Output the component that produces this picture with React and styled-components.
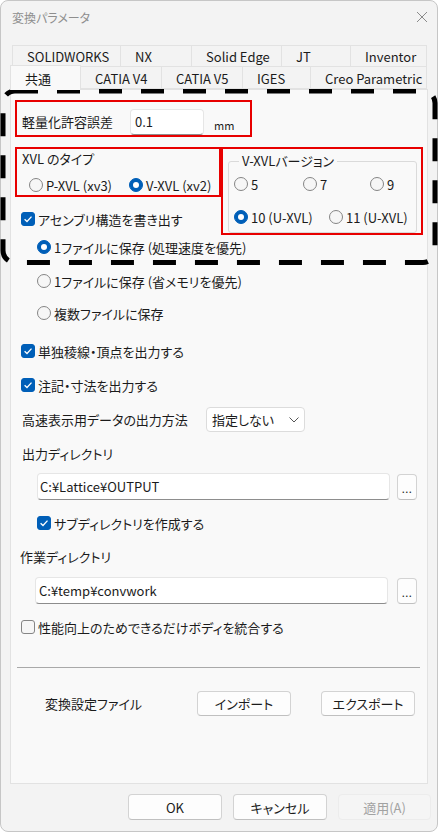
import React from "react";
import styled, { createGlobalStyle } from "styled-components";

const GlobalStyle = createGlobalStyle`
  html, body {
    margin: 0;
    padding: 0;
    background: #fff;
  }
  body {
    font-family: "Noto Sans CJK JP", "Noto Sans", sans-serif;
    font-size: 13px;
    color: #1b1b1b;
    font-feature-settings: "palt";
  }
  * {
    box-sizing: border-box;
  }
`;

const Window = styled.div`
  position: relative;
  width: 438px;
  height: 832px;
  border: 1px solid #c6c6c6;
  border-radius: 8px;
  background: #f3f3f3;
  display: flex;
  flex-direction: column;
`;

const TitleBar = styled.div`
  height: 34px;
  display: flex;
  align-items: center;
  justify-content: space-between;
  padding: 0 9px 2px 11px;
`;

const Title = styled.span`
  font-size: 12px;
  color: #8e8e8e;
`;

const Tabs = styled.div`
  margin: 10px 9px 0 9px;
  display: flex;
  flex-direction: column;
`;

const TabRow = styled.div`
  display: flex;
  height: ${(p) => p.$h}px;
  margin-left: ${(p) => p.$indent || 0}px;
  margin-top: ${(p) => p.$overlap || 0}px;
  align-items: flex-end;
`;

const Tab = styled.div`
  width: ${(p) => p.$w}px;
  height: ${(p) => (p.$active ? "25px" : "100%")};
  padding-left: 14px;
  display: flex;
  align-items: center;
  background: ${(p) => (p.$active ? "#f9f9f9" : "#f3f3f3")};
  border: 1px solid #e2e2e2;
  border-bottom: ${(p) => (p.$active ? "none" : "1px solid #e2e2e2")};
  margin-right: -1px;
  margin-bottom: ${(p) => (p.$active ? "-1px" : "0")};
  position: relative;
  z-index: ${(p) => (p.$active ? 2 : 1)};
  white-space: nowrap;
  padding-top: ${(p) => (p.$active ? "0" : "1px")};
`;

const Panel = styled.div`
  margin: 0 9px;
  height: 695px;
  background: #f9f9f9;
  border: 1px solid #e2e2e2;
  display: flex;
  flex-direction: column;
`;

const RedBox = styled.div`
  border: 2px solid #e80000;
  width: ${(p) => p.$w}px;
  height: ${(p) => p.$h}px;
`;

const ToleranceBox = styled(RedBox)`
  margin: 10px 0 0 4px;
  display: flex;
  align-items: center;
  padding: 6px 0 0 5px;
`;

const FieldLabel = styled.span`
  width: ${(p) => p.$w || "auto"};
  line-height: 18px;
  white-space: nowrap;
`;

const TextInput = styled.div`
  width: ${(p) => p.$w}px;
  height: ${(p) => p.$h}px;
  background: #fff;
  border: 1px solid #e6e6e6;
  border-bottom: 1px solid #8d8d8d;
  border-radius: 4px;
  padding-left: ${(p) => p.$pad}px;
  display: flex;
  align-items: center;
  white-space: nowrap;
`;

const Unit = styled.span`
  font-size: 11px;
  margin: 7px 0 0 10px;
`;

const TypeGrid = styled.div`
  display: grid;
  grid-template-columns: 206px 202px;
  margin: 10px 0 0 4px;
`;

const LeftCol = styled.div`
  display: flex;
  flex-direction: column;
`;

const XvlBox = styled(RedBox)`
  padding: 0 0 0 5px;
  display: flex;
  flex-direction: column;
`;

const Line = styled.div`
  display: flex;
  align-items: center;
  height: ${(p) => p.$h || 18}px;
  margin-top: ${(p) => p.$mt || 0}px;
  margin-left: ${(p) => p.$ml || 0}px;
  white-space: nowrap;
`;

const Option = styled.div`
  display: flex;
  align-items: center;
  width: ${(p) => (p.$w ? `${p.$w}px` : "auto")};
  white-space: nowrap;
`;

const RadioDot = styled.span`
  width: 14px;
  height: 14px;
  border-radius: 50%;
  flex: none;
  margin-right: 3px;
  background: ${(p) => (p.$on ? "#005fb8" : "#f6f6f6")};
  border: 1px solid ${(p) => (p.$on ? "#005fb8" : "#858585")};
  display: flex;
  align-items: center;
  justify-content: center;
  &::after {
    content: "";
    display: ${(p) => (p.$on ? "block" : "none")};
    width: 6px;
    height: 6px;
    border-radius: 50%;
    background: #fff;
  }
`;

const CheckSquare = styled.span`
  width: 14px;
  height: 14px;
  border-radius: 3px;
  flex: none;
  margin-right: 3px;
  background: ${(p) => (p.$on ? "#005fb8" : "#f6f6f6")};
  border: 1px solid ${(p) => (p.$on ? "#005fb8" : "#858585")};
  display: flex;
  align-items: center;
  justify-content: center;
`;

const VersionBox = styled(RedBox)`
  padding: 4px 4px 0 5px;
`;

const Group = styled.fieldset`
  margin: 0;
  padding: 6px 0 0 5px;
  border: 1px solid #dadada;
  border-radius: 3px;
  height: 80px;
  legend {
    margin-left: 5px;
    padding: 0 3px;
    line-height: 16px;
  }
`;

const SmallButton = styled.div`
  width: ${(p) => p.$w}px;
  height: ${(p) => p.$h}px;
  margin-left: ${(p) => p.$ml || 0}px;
  background: ${(p) => (p.$disabled ? "#f5f5f5" : "#fdfdfd")};
  border: 1px solid ${(p) => (p.$disabled ? "#ececec" : "#d3d3d3")};
  border-bottom-color: ${(p) => (p.$disabled ? "#ececec" : "#c0c0c0")};
  border-radius: 4px;
  color: ${(p) => (p.$disabled ? "#a2a2a2" : "#1b1b1b")};
  display: flex;
  align-items: center;
  justify-content: center;
  flex: none;
`;

const Dots = styled(SmallButton)`
  align-items: flex-end;
  padding-bottom: 6px;
  font-size: 11px;
  line-height: 10px;
  letter-spacing: 0.5px;
`;

const Select = styled.div`
  width: 99px;
  height: 25px;
  background: #fff;
  border: 1px solid #dcdcdc;
  border-radius: 4px;
  display: flex;
  align-items: center;
  justify-content: space-between;
  padding: 0 5px 0 5px;
`;

const Separator = styled.div`
  height: 1px;
  background: #a9a9a9;
  margin: 31px 7px 0 6px;
`;

const Footer = styled.div`
  display: flex;
  justify-content: flex-end;
  gap: 11px;
  padding: 10px 6px 0 0;
`;

const Annotation = styled.svg`
  position: absolute;
  left: -1px;
  top: 85px;
  pointer-events: none;
`;

function Radio({ on, children, w }) {
  return (
    <Option $w={w}>
      <RadioDot $on={on} />
      {children}
    </Option>
  );
}

function Check({ on, children }) {
  return (
    <Option>
      <CheckSquare $on={on}>
        {on && (
          <svg width="10" height="10" viewBox="0 0 10 10">
            <polyline points="1.6,5.2 4,7.5 8.5,2.6" fill="none" stroke="#fff" strokeWidth="1.3" />
          </svg>
        )}
      </CheckSquare>
      {children}
    </Option>
  );
}

const topTabs = [
  { label: "SOLIDWORKS", w: 109 },
  { label: "NX", w: 72 },
  { label: "Solid Edge", w: 91 },
  { label: "JT", w: 70 },
  { label: "Inventor", w: 77 },
];

const bottomTabs = [
  { label: "共通", w: 71, active: true },
  { label: "CATIA V4", w: 82 },
  { label: "CATIA V5", w: 82 },
  { label: "IGES", w: 69 },
  { label: "Creo Parametric", w: 117 },
];

export default function App() {
  return (
    <>
      <GlobalStyle />
      <Window>
        <TitleBar>
          <Title>変換パラメータ</Title>
          <svg width="12" height="12" viewBox="0 0 12 12">
            <path d="M1 1 L11 11 M11 1 L1 11" stroke="#8a8a8a" strokeWidth="1" />
          </svg>
        </TitleBar>

        <Tabs>
          <TabRow $h={22} $indent={2}>
            {topTabs.map((t) => (
              <Tab key={t.label} $w={t.w}>
                {t.label}
              </Tab>
            ))}
          </TabRow>
          <TabRow $h={23} $overlap={-1}>
            {bottomTabs.map((t) => (
              <Tab key={t.label} $w={t.w} $active={t.active}>
                {t.label}
              </Tab>
            ))}
          </TabRow>
        </Tabs>

        <Panel>
          <ToleranceBox $w={237} $h={37}>
            <FieldLabel $w="108px">軽量化許容誤差</FieldLabel>
            <TextInput $w={74} $h={26} $pad={4}>
              0.1
            </TextInput>
            <Unit>mm</Unit>
          </ToleranceBox>

          <TypeGrid>
            <LeftCol>
              <XvlBox $w={206} $h={50}>
                <Line>XVL のタイプ</Line>
                <Line $mt={9} $ml={7}>
                  <Radio w={100}>P-XVL (xv3)</Radio>
                  <Radio on>V-XVL (xv2)</Radio>
                </Line>
              </XvlBox>
              <Line $mt={13} $ml={6}>
                <Check on>アセンブリ構造を書き出す</Check>
              </Line>
            </LeftCol>
            <VersionBox $w={202} $h={88}>
              <Group>
                <legend>V-XVLバージョン</legend>
                <Line>
                  <Radio w={69}>5</Radio>
                  <Radio w={67}>7</Radio>
                  <Radio>9</Radio>
                </Line>
                <Line $mt={15}>
                  <Radio on w={95}>10 (U-XVL)</Radio>
                  <Radio>11 (U-XVL)</Radio>
                </Line>
              </Group>
            </VersionBox>
          </TypeGrid>

          <Line $mt={3} $ml={26}>
            <Radio on>1ファイルに保存 (処理速度を優先)</Radio>
          </Line>
          <Line $mt={16} $ml={26}>
            <Radio>1ファイルに保存 (省メモリを優先)</Radio>
          </Line>
          <Line $mt={14} $ml={26}>
            <Radio>複数ファイルに保存</Radio>
          </Line>
          <Line $mt={20} $ml={10}>
            <Check on>単独稜線・頂点を出力する</Check>
          </Line>
          <Line $mt={16} $ml={10}>
            <Check on>注記・寸法を出力する</Check>
          </Line>
          <Line $h={25} $mt={13} $ml={11}>
            <FieldLabel $w="184px">高速表示用データの出力方法</FieldLabel>
            <Select>
              指定しない
              <svg width="10" height="6" viewBox="0 0 10 6">
                <polyline points="0.5,0.5 5,5 9.5,0.5" fill="none" stroke="#555" strokeWidth="1" />
              </svg>
            </Select>
          </Line>

          <Line $mt={12} $ml={11}>
            出力ディレクトリ
          </Line>
          <Line $h={27} $mt={11} $ml={26}>
            <TextInput $w={353} $h={27} $pad={2}>
              C:¥Lattice¥OUTPUT
            </TextInput>
            <Dots $w={20} $h={26} $ml={7}>
              ...
            </Dots>
          </Line>
          <Line $mt={14} $ml={26}>
            <Check on>サブディレクトリを作成する</Check>
          </Line>
          <Line $mt={15} $ml={9}>
            作業ディレクトリ
          </Line>
          <Line $h={27} $mt={12} $ml={24}>
            <TextInput $w={353} $h={27} $pad={3}>
              C:¥temp¥convwork
            </TextInput>
            <Dots $w={20} $h={26} $ml={9}>
              ...
            </Dots>
          </Line>
          <Line $mt={14} $ml={10}>
            <Check>性能向上のためできるだけボディを統合する</Check>
          </Line>

          <Separator />

          <Line $h={25} $mt={23} $ml={34}>
            <FieldLabel $w="152px">変換設定ファイル</FieldLabel>
            <SmallButton $w={94} $h={25}>
              インポート
            </SmallButton>
            <SmallButton $w={94} $h={25} $ml={30}>
              エクスポート
            </SmallButton>
          </Line>
        </Panel>

        <Footer>
          <SmallButton $w={94} $h={26}>
            OK
          </SmallButton>
          <SmallButton $w={94} $h={26}>
            キャンセル
          </SmallButton>
          <SmallButton $w={93} $h={26} $disabled>
            適用(A)
          </SmallButton>
        </Footer>

        <Annotation width="440" height="180" viewBox="0 0 440 180">
          <rect
            x="3"
            y="5"
            width="432"
            height="171.5"
            rx="12"
            fill="none"
            stroke="#000"
            strokeWidth="5"
            strokeDasharray="23 19"
          />
        </Annotation>
      </Window>
    </>
  );
}
